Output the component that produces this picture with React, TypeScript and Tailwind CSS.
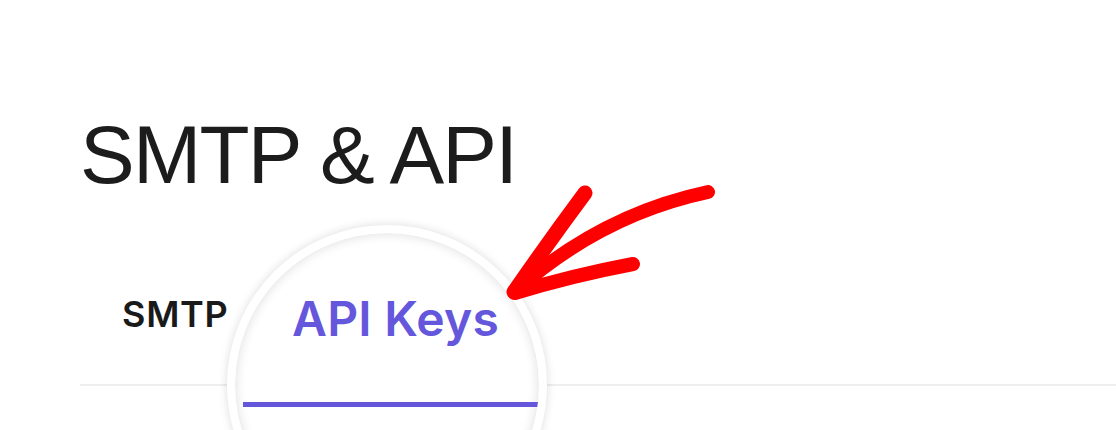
import React from "react";

export default function App() {
  return (
    <div className="relative w-full h-[430px] overflow-hidden bg-white">
      <div className="pl-[80px]">
        <h1
          className="pt-[114px] text-[82px] leading-none tracking-[-0.022em] text-[#1c1c1c] font-normal"
          style={{ fontFamily: '"Liberation Sans", Arial, sans-serif' }}
        >
          SMTP &amp; API
        </h1>
        <div className="mt-[100px] flex border-b-2 border-[#eeeeee] pb-[52px]">
          <div
            className="ml-[42px] text-[36px] leading-none font-semibold tracking-[0.02em] text-[#1a1a1a]"
            style={{ fontFamily: "Inter, sans-serif" }}
          >
            SMTP
          </div>
        </div>
      </div>

      <div className="absolute left-[227px] top-[225px] w-[320px] h-[320px] rounded-full border-8 border-white bg-white overflow-hidden shadow-[0_0_10px_rgba(0,0,0,0.14),inset_0_0_12px_rgba(0,0,0,0.14)]">
        <div className="flex flex-col pt-[62px]">
          <div
            className="pl-[57px] text-[48px] leading-none font-semibold tracking-[0.005em] text-[#6457dc]"
            style={{ fontFamily: "Inter, sans-serif" }}
          >
            API Keys
          </div>
          <div className="ml-[8px] mt-[59px] w-[295px] h-[5px] bg-[#6457dc]" />
        </div>
      </div>

      <svg
        className="absolute left-0 top-0 pointer-events-none"
        width="1116"
        height="430"
        viewBox="0 0 1116 430"
      >
        <g fill="none" stroke="#ff0000" strokeLinecap="round" strokeLinejoin="round">
          <path d="M708 192 Q600 215 514 292" strokeWidth="14" />
          <path d="M585 193 Q550 240 514 292" strokeWidth="15" />
          <path d="M633 264 Q570 276 515 293" strokeWidth="14" />
        </g>
      </svg>
    </div>
  );
}
